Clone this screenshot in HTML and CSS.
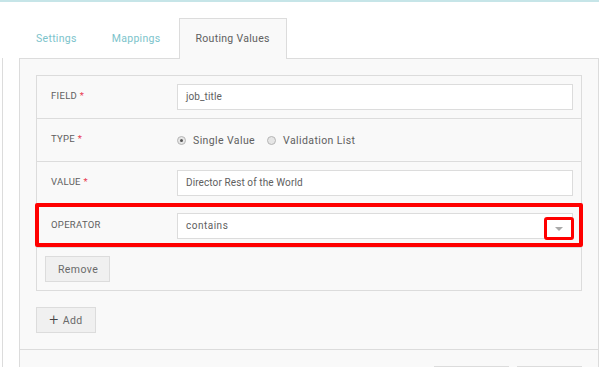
FILE: index.html
```html
<!DOCTYPE html>
<html lang="en">
<head>
  <meta charset="UTF-8" />
  <title>Routing Values</title>
  <link rel="stylesheet" href="styles.css">
</head>
<body>
  <div class="topbar"></div>

  <div class="page">
    <div class="sidebar"></div>

    <div class="main">
      <!-- Tabs -->
      <ul class="tabs">
        <li class="tab">Settings</li>
        <li class="tab">Mappings</li>
        <li class="tab active">Routing Values</li>
      </ul>

      <div class="panel">
        <div class="panel-body">
          <div class="card">
            <div class="row">
              <div class="label">Field <span class="req">*</span></div>
              <div class="control"><div class="input">job_title</div></div>
            </div>

            <div class="row">
              <div class="label">Type <span class="req">*</span></div>
              <div class="control radios">
                <span class="radio checked"></span><span class="radio-text">Single Value</span>
                <span class="radio"></span><span class="radio-text">Validation List</span>
              </div>
            </div>

            <div class="row">
              <div class="label">Value <span class="req">*</span></div>
              <div class="control"><div class="input">Director Rest of the World</div></div>
            </div>

            <div class="row highlight">
              <div class="label">Operator</div>
              <div class="control">
                <div class="input select">
                  contains
                  <span class="caret-box"><span class="caret"></span></span>
                </div>
              </div>
            </div>

            <div class="row row-actions">
              <button class="btn btn-remove">Remove</button>
            </div>
          </div>

          <button class="btn btn-add"><span class="plus">+</span>Add</button>
        </div>

        <!-- footer buttons sit below the fold -->
        <div class="panel-footer">
          <button class="btn btn-cancel"></button>
          <button class="btn btn-save"></button>
        </div>
      </div>
    </div>
  </div>
</body>
</html>
```

FILE: styles.css
```css
* {
  margin: 0;
  padding: 0;
  box-sizing: border-box;
}

html, body {
  height: 100%;
  overflow: hidden;
}

body {
  background: #fff;
  font-family: Roboto, "Liberation Sans", sans-serif;
  color: #555;
}

.topbar {
  width: 599px;
  height: 2px;
  background: #c6e5e8;
}

.page {
  display: flex;
  padding-top: 16px;
  height: calc(100% - 2px);
}

.sidebar {
  width: 3px;
  margin-top: 40px;
  border-right: 1px solid #dcdcdc;
}

.main {
  width: 580px;
  margin-left: 16px;
}

/* tabs */
.tabs {
  display: flex;
  list-style: none;
  height: 40px;
  position: relative;
  z-index: 1;
}

.tab {
  padding: 0 16px;
  margin-right: 1px;
  line-height: 40px;
  font-size: 10.5px;
  letter-spacing: 0.3px;
  color: #7cc3cb;
  border: 1px solid transparent;
  border-bottom: none;
}

.tab.active {
  color: #606060;
  background: #f9f9f9;
  border-color: #dcdcdc;
  height: 41px;
  line-height: 39px;
}

/* panel */
.panel {
  border: 1px solid #dcdcdc;
  background: #f9f9f9;
}

.panel-body {
  padding: 16px;
}

.card {
  border: 1px solid #dcdcdc;
}

.row {
  display: flex;
  align-items: center;
  padding: 8px 8px 8px 14px;
  border-bottom: 1px solid #dcdcdc;
  position: relative;
}

.row:last-child {
  border-bottom: none;
}

.label {
  width: 126px;
  font-size: 9.5px;
  letter-spacing: 0.3px;
  text-transform: uppercase;
  color: #606060;
  padding-bottom: 3px;
}

.req {
  color: #e8384f;
}

.control {
  flex: 1;
}

.input {
  height: 26px;
  line-height: 24px;
  padding: 0 8px;
  background: #fff;
  border: 1px solid #dcdcdc;
  font-size: 10px;
  letter-spacing: 0.1px;
  color: #606060;
}

.select {
  position: relative;
  height: 26px;
  letter-spacing: 0.5px;
}

.caret-box {
  position: absolute;
  right: -2px;
  top: 3px;
  width: 30px;
  height: 23px;
  border: 3px solid #f00;
  border-radius: 3px;
  display: flex;
  align-items: center;
  justify-content: center;
}

.caret {
  width: 0;
  height: 0;
  border-left: 4px solid transparent;
  border-right: 4px solid transparent;
  border-top: 4px solid #aaa;
}

/* the red frame around the operator row */
.highlight::after {
  content: "";
  position: absolute;
  top: -2px;
  bottom: 0;
  left: -2px;
  right: -2px;
  border: 4px solid #f00;
  border-radius: 2px;
}

.radios {
  display: flex;
  align-items: center;
  height: 26px;
  font-size: 10.5px;
  letter-spacing: 0.4px;
  color: #606060;
}

.radio {
  width: 9px;
  height: 9px;
  border-radius: 50%;
  border: 1px solid #b5b5b5;
  background: #e6e6e6;
  margin-right: 7px;
  position: relative;
}

.radio.checked::after {
  content: "";
  position: absolute;
  left: 2px;
  top: 2px;
  width: 3px;
  height: 3px;
  border-radius: 50%;
  background: #555;
}

.radio-text {
  margin-right: 12px;
}

.row-actions {
  padding: 8px;
}

/* buttons */
.btn {
  height: 26px;
  background: #f0f0f0;
  border: 1px solid #dcdcdc;
  font-family: Roboto, "Liberation Sans", sans-serif;
  font-size: 10.5px;
  letter-spacing: 0.4px;
  color: #6a6a6a;
  padding: 0 12px;
}

.btn-remove {
  width: 65px;
}

.btn-add {
  margin-top: 16px;
  width: 60px;
  display: flex;
  align-items: center;
  justify-content: center;
}

.plus {
  font-size: 16px;
  font-weight: 300;
  color: #444;
  margin-right: 4px;
  margin-top: -2px;
}

.panel-footer {
  border-top: 1px solid #dcdcdc;
  padding: 16px;
  display: flex;
  justify-content: flex-end;
  gap: 8px;
}

.btn-cancel {
  width: 75px;
  background: #fff;
}

.btn-save {
  width: 65px;
  background: #fff;
}
```
